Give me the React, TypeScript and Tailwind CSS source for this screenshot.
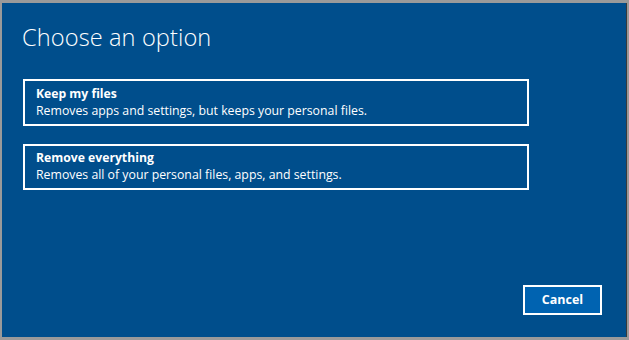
import React from "react";

export default function App() {
  return (
    <div className="w-[629px] h-[340px] bg-[#9a9a9a] pt-[3px] pl-[2px] pr-[2px] pb-[3px]" style={{ fontFamily: '"Open Sans", "Noto Sans", sans-serif' }}>
      <div className="w-[625px] h-[334px] bg-[#004e8c] border-r border-[#3a3a3a] flex flex-col text-white">
        <h1 className="ml-[20px] mt-[19px] text-[23.6px] leading-[30px] font-light tracking-[0.1px]">Choose an option</h1>
        <div className="ml-[21px] mt-[27px] flex flex-col gap-[18px] w-[506px]">
          <button className="border-2 border-white h-[47px] text-left px-[11px] flex flex-col justify-center">
            <span className="text-[12.2px] leading-[16px] font-bold">Keep my files</span>
            <span className="text-[12.3px] leading-[18px]">Removes apps and settings, but keeps your personal files.</span>
          </button>
          <button className="border-2 border-white h-[46px] text-left px-[11px] flex flex-col justify-center">
            <span className="text-[12.2px] leading-[16px] font-bold">Remove everything</span>
            <span className="text-[12.3px] leading-[18px]">Removes all of your personal files, apps, and settings.</span>
          </button>
        </div>
        <div className="flex-1" />
        <div className="flex justify-end pr-[24px] pb-[22px]">
          <button className="w-[79px] h-[30px] border-2 border-white bg-[#0063b1] text-[12.5px] font-bold">Cancel</button>
        </div>
      </div>
    </div>
  );
}
